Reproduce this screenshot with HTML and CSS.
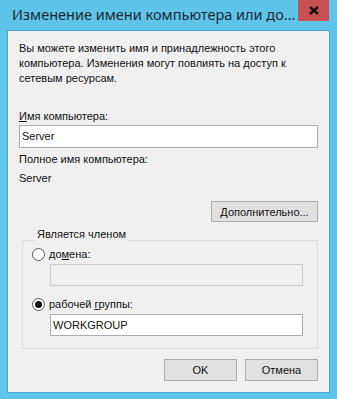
FILE: index.html
```html
<!DOCTYPE html>
<html lang="ru">
<head>
  <meta charset="UTF-8" />
  <title>Изменение имени компьютера или домена</title>
  <link rel="stylesheet" href="styles.css">
</head>
<body>
  <div class="window">
    <!-- Title bar -->
    <div class="titlebar">
      <span class="title">Изменение имени компьютера или до...</span>
      <div class="close">
        <svg width="10" height="9" viewBox="0 0 10 9">
          <path d="M1 1 L9 8 M9 1 L1 8" stroke="#1a0f0c" stroke-width="2.4" fill="none" />
        </svg>
      </div>
    </div>

    <!-- Dialog body -->
    <div class="client">
      <p class="intro">Вы можете изменить имя и принадлежность этого<br>компьютера. Изменения могут повлиять на доступ к<br>сетевым ресурсам.</p>

      <div class="label name-label"><u>И</u>мя компьютера:</div>
      <div class="textbox name-box">Server</div>

      <div class="label full-label">Полное имя компьютера:</div>
      <div class="label full-value">Server</div>

      <div class="more-row">
        <button class="btn more-btn"><u>Д</u>ополнительно...</button>
      </div>

      <div class="group">
        <div class="group-caption">Является членом</div>
        <div class="radio-row">
          <span class="radio"></span>
          <span>до<u>м</u>ена:</span>
        </div>
        <div class="textbox group-box disabled"></div>
        <div class="radio-row second">
          <span class="radio checked"></span>
          <span>рабочей <u>г</u>руппы:</span>
        </div>
        <div class="textbox group-box">WORKGROUP</div>
      </div>

      <div class="dialog-buttons">
        <button class="btn action-btn">OK</button>
        <button class="btn action-btn">Отмена</button>
      </div>
    </div>
  </div>
</body>
</html>
```

FILE: styles.css
```css
* {
  margin: 0;
  padding: 0;
  box-sizing: border-box;
}
body {
  width: 337px;
  height: 399px;
  overflow: hidden;
  background: #5fc4e9;
  font-family: 'Liberation Sans', Arial, sans-serif;
  font-size: 11px;
  color: #111;
}
/* Window frame */
.window {
  width: 337px;
  height: 399px;
  padding: 0 7px 6px 7px;
  display: flex;
  flex-direction: column;
}
.titlebar {
  height: 30px;
  display: flex;
  align-items: flex-start;
  justify-content: space-between;
}
.title {
  margin: 4px 0 0 5px;
  font-family: 'Noto Sans', 'Open Sans', sans-serif;
  font-size: 14.5px;
  line-height: 20px;
  color: #1b2a36;
  white-space: nowrap;
}
.close {
  width: 31px;
  height: 21px;
  margin-right: 1px;
  background: #c75050;
  display: flex;
  align-items: center;
  justify-content: center;
}
/* Client area */
.client {
  flex: 1;
  background: #f0f0f0;
  border: 1px solid #47a6cf;
  padding: 10px 11px 0 11px;
  display: flex;
  flex-direction: column;
  line-height: 15px;
}
.intro {
  line-height: 15px;
}
.label {
  height: 15px;
}
.name-label {
  margin-top: 23px;
}
.textbox {
  background: #fff;
  border: 1px solid #abadb3;
  padding: 0 2px;
  display: flex;
  align-items: center;
}
.name-box {
  height: 23px;
  margin-top: 1px;
}
.full-label {
  margin-top: 4px;
}
.full-value {
  margin-top: 4px;
}
.more-row {
  display: flex;
  justify-content: flex-end;
  margin-top: 15px;
}
.btn {
  font-family: inherit;
  font-size: inherit;
  color: #111;
  background: #e1e1e1;
  border: 1px solid #adadad;
  height: 21px;
}
.more-btn {
  width: 107px;
}
/* Group box */
.group {
  margin: 18px 0 0 3px;
  border: 1px solid #dcdcdc;
  padding: 0 14px 12px 9px;
  display: flex;
  flex-direction: column;
}
.group-caption {
  align-self: flex-start;
  margin: -14px 0 0 3px;
  padding: 0 2px;
  background: #f0f0f0;
  line-height: 15px;
}
.radio-row {
  display: flex;
  align-items: center;
  gap: 4px;
  height: 15px;
  margin-top: 5px;
}
.radio-row.second {
  margin-top: 11px;
}
.radio {
  width: 13px;
  height: 13px;
  border: 1px solid #555;
  border-radius: 50%;
  background: #fff;
  display: flex;
  align-items: center;
  justify-content: center;
}
.radio.checked::after {
  content: '';
  width: 7px;
  height: 7px;
  border-radius: 50%;
  background: #111;
}
.group-box {
  height: 22px;
  margin: 2px 0 0 18px;
}
.group-box.disabled {
  background: #f0f0f0;
  border-color: #cccccc;
}
/* Bottom buttons */
.dialog-buttons {
  display: flex;
  justify-content: flex-end;
  gap: 8px;
  margin-top: 10px;
}
.action-btn {
  width: 73px;
  height: 22px;
}
```
